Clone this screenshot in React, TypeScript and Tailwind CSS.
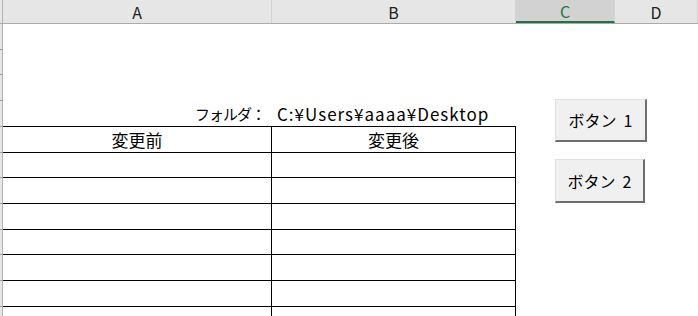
import React from "react";

const rowHeights = [26, 25, 26, 26, 26, 25, 26, 26, 25, 26, 26, 26];
const font = { fontFamily: '"Noto Sans CJK JP", "Noto Sans", sans-serif' };

function HeaderCell({ label, w, active }: { label: string; w: string; active?: boolean }) {
  return (
    <div
      className={`${w} h-full flex items-center justify-center border-r border-[#d4d4d4] text-[16px] ${
        active ? "bg-[#d2d2d2] text-[#217346] border-b-2 border-b-[#217346]" : "text-[#222]"
      }`}
    >
      {label}
    </div>
  );
}

function FormButton({ n, top, w, h }: { n: string; top: string; w: string; h: string }) {
  return (
    <button
      className={`absolute left-[555px] ${top} ${w} ${h} flex items-center justify-center bg-[#f0f0f0] border-t border-l border-[#e0e0e0] border-r-2 border-b-2 border-r-[#6e6e6e] border-b-[#6e6e6e] text-[16px] text-black`}
    >
      <span>ボタン</span>
      <span className="ml-[7px]">{n}</span>
    </button>
  );
}

export default function App() {
  return (
    <div className="relative w-[698px] h-[316px] overflow-hidden bg-white text-black" style={font}>
      {/* column headers */}
      <div className="flex h-[24px] bg-[#e6e6e6] border-b border-[#ababab]">
        <div className="w-[3px] h-full border-r border-[#b4b4b4]" />
        <HeaderCell label="A" w="w-[269px]" />
        <HeaderCell label="B" w="w-[244px]" />
        <HeaderCell label="C" w="w-[99px]" active />
        <HeaderCell label="D" w="flex-1" />
      </div>

      {/* sheet body */}
      <div className="flex flex-col">
        {rowHeights.map((h, i) => {
          const inTable = i >= 4;
          return (
            <div key={i} className="flex" style={{ height: h }}>
              <div className="w-[3px] shrink-0 bg-[#e6e6e6] border-r border-[#b4b4b4] border-b border-b-[#9a9a9a]" />
              {i === 3 && (
                <>
                  <div className="w-[269px] flex items-end justify-end pr-[7px] pb-[2px] text-[15px] tracking-[-1px] leading-[20px] border-b border-black">
                    フォルダ：
                  </div>
                  <div className="w-[244px] flex items-end pl-[5px] pb-[2px] text-[17px] tracking-[1px] leading-[20px] border-b border-black">
                    C:¥Users¥aaaa¥Desktop
                  </div>
                </>
              )}
              {inTable && (
                <>
                  <div className="w-[269px] flex items-center justify-center border-b border-r border-black text-[17px] leading-[20px]">
                    {i === 4 ? "変更前" : ""}
                  </div>
                  <div className="w-[244px] flex items-center justify-center border-b border-r border-black text-[17px] leading-[20px]">
                    {i === 4 ? "変更後" : ""}
                  </div>
                </>
              )}
            </div>
          );
        })}
      </div>

      {/* form buttons floating over the sheet */}
      <FormButton n="1" top="top-[99px]" w="w-[92px]" h="h-[43px]" />
      <FormButton n="2" top="top-[159px]" w="w-[90px]" h="h-[44px]" />
    </div>
  );
}
